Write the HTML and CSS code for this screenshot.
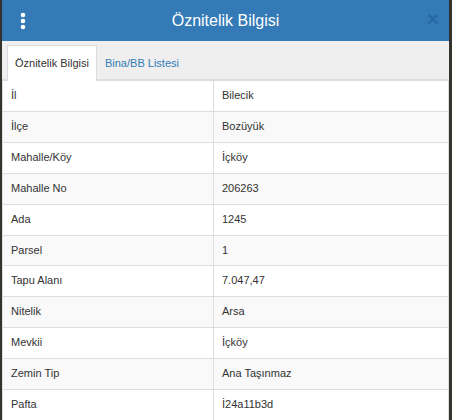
FILE: index.html
```html
<!DOCTYPE html>
<html lang="tr">
<head>
  <meta charset="UTF-8" />
  <title>Öznitelik Bilgisi</title>
  <link rel="stylesheet" href="styles.css">
</head>
<body>
  <div class="panel">
    <div class="panel-head">
      <span class="menu-dots">
        <svg width="6" height="18" viewBox="0 0 6 18"><circle cx="3" cy="3" r="2.3" fill="#fff"/><circle cx="3" cy="9" r="2.3" fill="#fff"/><circle cx="3" cy="15" r="2.3" fill="#fff"/></svg>
      </span>
      <h1>Öznitelik Bilgisi</h1>
      <span class="close">&times;</span>
    </div>

    <ul class="tabs">
      <li class="active">Öznitelik Bilgisi</li>
      <li>Bina/BB Listesi</li>
    </ul>

    <table class="attr">
      <tbody>
        <tr><td>İl</td><td>Bilecik</td></tr>
        <tr><td>İlçe</td><td>Bozüyük</td></tr>
        <tr><td>Mahalle/Köy</td><td>İçköy</td></tr>
        <tr><td>Mahalle No</td><td>206263</td></tr>
        <tr><td>Ada</td><td>1245</td></tr>
        <tr><td>Parsel</td><td>1</td></tr>
        <tr><td>Tapu Alanı</td><td>7.047,47</td></tr>
        <tr><td>Nitelik</td><td>Arsa</td></tr>
        <tr><td>Mevkii</td><td>İçköy</td></tr>
        <tr><td>Zemin Tip</td><td>Ana Taşınmaz</td></tr>
        <tr><td>Pafta</td><td>İ24a11b3d</td></tr>
      </tbody>
    </table>
  </div>
</body>
</html>
```

FILE: styles.css
```css
body {
  margin: 0;
  background-color: #35312d;
  font-family: "Liberation Sans", Arial, sans-serif;
  color: #333;
  overflow: hidden;
}

.panel {
  width: 447px;
  margin-left: 2px;
  height: 420px;
  background-color: #fff;
}

.panel-head {
  height: 41px;
  background-color: #337ab7;
  display: flex;
  align-items: center;
  position: relative;
}

.menu-dots {
  display: flex;
  margin-left: 18px;
  margin-top: 1px;
}

.panel-head h1 {
  flex: 1;
  margin: 0;
  font-size: 16px;
  font-weight: normal;
  color: #fff;
  text-align: center;
  padding-right: 24px;
}

.close {
  position: absolute;
  right: 10px;
  top: 8px;
  font-size: 21px;
  font-weight: bold;
  line-height: 1;
  color: #1f5f96;
  opacity: 0.6;
}

.tabs {
  list-style: none;
  margin: 0;
  padding: 4px 0 0 5px;
  background-color: #efefef;
  border-bottom: 1px solid #ddd;
  display: flex;
  height: 34px;
}

.tabs li {
  font-size: 11px;
  padding: 0 7px;
  line-height: 34px;
  color: #337ab7;
  border: 1px solid transparent;
  border-bottom: 0;
  margin-bottom: -1px;
}

.tabs li.active {
  background-color: #fff;
  color: #333;
  border-color: #ddd;
  height: 35px;
}

table.attr {
  width: 100%;
  border-collapse: collapse;
  border-left: 1px solid #ddd;
  border-top: 1px solid #ddd;
}

table.attr td {
  font-size: 11px;
  line-height: 15.9px;
  padding: 7px 8px;
  border-bottom: 1px solid #ddd;
  border-right: 1px solid #ddd;
}

table.attr td:first-child {
  width: 194px;
}

table.attr tr:nth-child(even) td {
  background-color: #f9f9f9;
}
```
